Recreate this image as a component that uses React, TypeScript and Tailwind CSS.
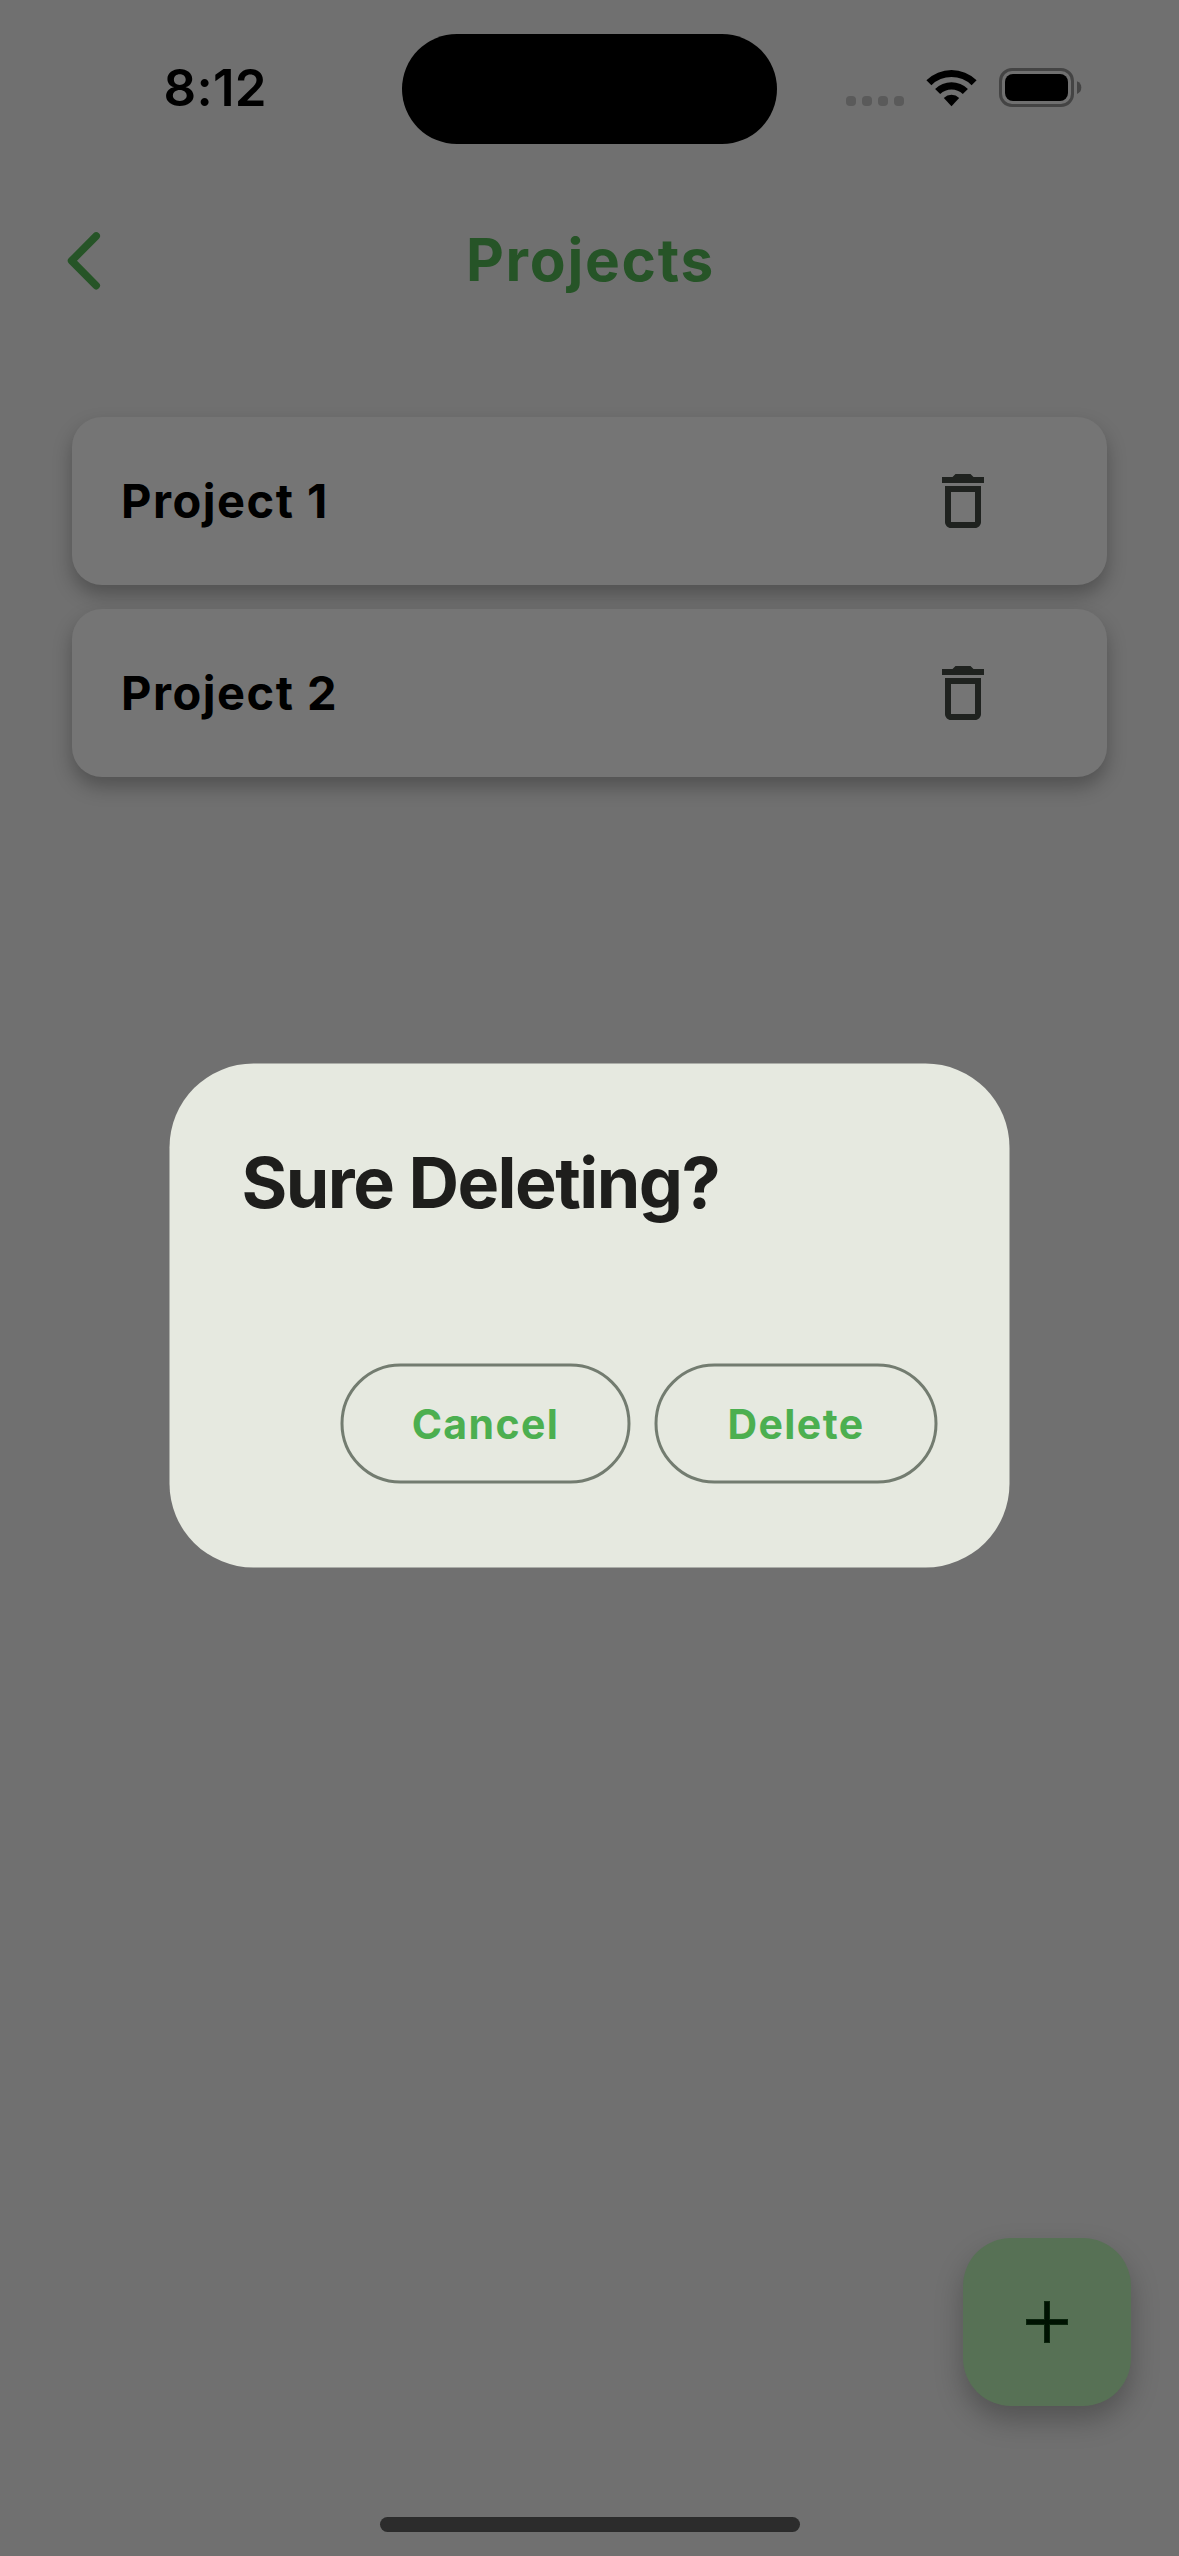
const projects = ["Project 1", "Project 2"];

function StatusBar() {
  return (
    <header className="flex h-[178px] shrink-0 items-start">
      <div className="mt-[63px] w-[402px] pl-[163.5px] text-[51px] leading-[50px] font-semibold tracking-[0.3px] text-black">
        8:12
      </div>
      <div className="mt-[34px] h-[110px] w-[375px] rounded-full bg-black" />
      <div className="mt-[67px] ml-[69px] flex items-start">
        <div className="mt-[29px] flex gap-1.5">
          {[0, 1, 2, 3].map((dot) => (
            <span key={dot} className="size-[10px] rounded-[4px] bg-[#5a5a5a]" />
          ))}
        </div>
        <svg className="mt-[2px] ml-[22px]" width="51" height="38" viewBox="0 0 51 38">
          <path d="M0.4 11.2a36 36 0 0 1 50.2 0L45.6 16.2a28.6 28.6 0 0 0-40.2 0z" />
          <path d="M9.1 20a23.6 23.6 0 0 1 32.8 0L36.8 25.1a16.4 16.4 0 0 0-22.6 0z" />
          <path d="M17.8 28.9a11.2 11.2 0 0 1 15.4 0L25.5 37.2z" />
        </svg>
        <svg className="ml-[22px]" width="84" height="42" viewBox="0 0 84 42">
          <rect x="1.5" y="2.5" width="72" height="36" rx="11.5" fill="none" stroke="#444444" strokeWidth="3" />
          <rect x="6" y="7" width="63" height="27" rx="8" />
          <path d="M78 14.2a6.9 6.9 0 0 1 0 12.8z" fill="#444444" />
        </svg>
      </div>
    </header>
  );
}

function TitleBar() {
  return (
    <div className="flex h-[164px] shrink-0 items-center">
      <svg width="168" height="164" viewBox="0 0 168 164">
        <path
          d="M96.2 58L71.6 82.8L96.2 107.6"
          fill="none"
          stroke="#265427"
          strokeWidth="7.6"
          strokeLinecap="round"
          strokeLinejoin="round"
        />
      </svg>
      <h1 className="w-[845px] text-center text-[58.5px] leading-[70px] font-bold tracking-[1.75px] text-[#265427]">
        Projects
      </h1>
    </div>
  );
}

function TrashIcon() {
  return (
    <svg className="size-[72px]" viewBox="0 0 24 24" fill="#1f221f">
      <path d="M16 9v10H8V9h8m-1.5-6h-5l-1 1H5v2h14V4h-3.5l-1-1zM18 7H6v12c0 1.1.9 2 2 2h8c1.1 0 2-.9 2-2V7z" />
    </svg>
  );
}

function ProjectCard({ name }: { name: string }) {
  return (
    <div className="flex h-[168px] items-center justify-between rounded-[30px] bg-[#757575] pr-[108px] pl-[49px] shadow-[0_10px_19px_rgba(0,0,0,0.28)]">
      <span className="pb-px text-[47px] leading-[56px] font-bold tracking-[1.5px] text-black">{name}</span>
      <TrashIcon />
    </div>
  );
}

function AddButton() {
  return (
    <button className="flex size-[168px] items-center justify-center rounded-[48px] bg-[#577155] shadow-[0_14px_28px_rgba(0,0,0,0.26)]">
      <svg className="size-[72px]" viewBox="0 0 72 72">
        <path d="M15 36h42M36 15v42" stroke="#0b250d" strokeWidth="6" />
        <path d="M16 36h40M36 16v40" stroke="#001202" strokeWidth="4" />
      </svg>
    </button>
  );
}

function DialogButton({ label, className }: { label: string; className: string }) {
  return (
    <button
      className={`flex h-[120px] items-center justify-center rounded-full border-3 border-[#737c70] text-[41px] leading-[50px] font-bold tracking-[1.4px] text-[#4caf50] ${className}`}
    >
      {label}
    </button>
  );
}

function DeleteDialog() {
  return (
    <div className="absolute inset-0 -translate-x-[0.5px] -translate-y-[0.5px] pt-[1064px] pl-[170px]">
      <div
        role="dialog"
        className="flex h-[504px] w-[840px] flex-col justify-between rounded-[84px] bg-[#e6e9e0] px-[72px] pt-[71px] pb-[84px]"
      >
        <h2 className="text-[70px] leading-[96px] font-bold tracking-[-1.52px] text-[#1e1e1c]">Sure Deleting?</h2>
        <div className="flex justify-end gap-6">
          <DialogButton label="Cancel" className="w-[290px]" />
          <DialogButton label="Delete" className="w-[283px]" />
        </div>
      </div>
    </div>
  );
}

export default function App() {
  return (
    <div className="relative flex h-[2556px] w-[1179px] flex-col overflow-hidden bg-[#707070] font-['Inter',sans-serif]">
      <StatusBar />
      <TitleBar />
      <main className="flex flex-1 flex-col gap-6 px-[72px] pt-[75px]">
        {projects.map((name) => (
          <ProjectCard key={name} name={name} />
        ))}
      </main>
      <div className="flex shrink-0 justify-end pr-12 pb-[111px]">
        <AddButton />
      </div>
      <div className="mb-6 ml-[380px] h-[15px] w-[420px] shrink-0 rounded-full bg-[#2c2c2c]" />
      <DeleteDialog />
    </div>
  );
}
